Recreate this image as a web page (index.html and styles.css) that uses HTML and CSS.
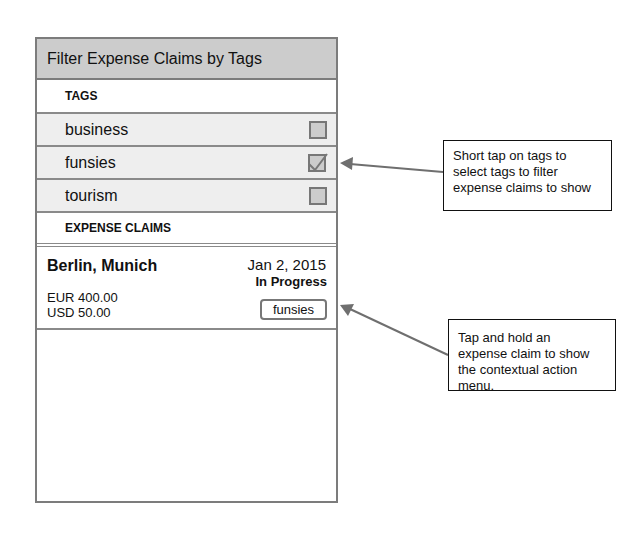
FILE: index.html
```html
<!DOCTYPE html>
<html>
<head>
<meta charset="utf-8">
<link rel="stylesheet" href="styles.css">
</head>
<body>
<div class="page">
  <div class="phone">
    <div class="header">Filter Expense Claims by Tags</div>
    <div class="section">TAGS</div>
    <div class="tag-row"><span>business</span><span class="check"></span></div>
    <div class="tag-row"><span>funsies</span>
      <svg class="checked" width="20" height="20" viewBox="0 0 20 20">
        <rect x="1" y="3" width="16" height="16" fill="#cccccc" stroke="#777" stroke-width="2"/>
        <path d="M1 12 L7 18 L19 2" fill="none" stroke="#777" stroke-width="2"/>
      </svg>
    </div>
    <div class="tag-row"><span>tourism</span><span class="check"></span></div>
    <div class="section section-claims">EXPENSE CLAIMS</div>
    <div class="claim">
      <div class="claim-left">
        <div class="claim-title">Berlin, Munich</div>
        <div class="amounts">
          <div>EUR 400.00</div>
          <div>USD 50.00</div>
        </div>
      </div>
      <div class="claim-right">
        <div class="claim-date">Jan 2, 2015</div>
        <div class="claim-status">In Progress</div>
        <div class="claim-tag">funsies</div>
      </div>
    </div>
  </div>

  <svg class="arrows" width="625" height="540" viewBox="0 0 625 540">
    <line x1="443" y1="172" x2="350" y2="164" stroke="#6f6f6f" stroke-width="2"/>
    <polygon points="340,163 353,157 352,170" fill="#6f6f6f"/>
    <line x1="448" y1="355" x2="350" y2="309" stroke="#6f6f6f" stroke-width="2"/>
    <polygon points="340,305 354,304 348,316" fill="#6f6f6f"/>
  </svg>

  <div class="note note-one">Short tap on tags to select tags to filter expense claims to show</div>
  <div class="note note-two">Tap and hold an expense claim to show the contextual action menu.</div>
</div>
</body>
</html>
```
FILE: styles.css
```css
* { box-sizing: border-box; }
body {
  margin: 0;
  font-family: "Liberation Sans", Arial, sans-serif;
  color: #111;
  background: #fff;
}
.page {
  position: relative;
  width: 625px;
  height: 540px;
  padding: 37px 0 0 35px;
}
.phone {
  width: 303px;
  height: 466px;
  border: 2px solid #7c7c7c;
  display: flex;
  flex-direction: column;
}
.header {
  height: 41px;
  background: #cccccc;
  border-bottom: 2px solid #7c7c7c;
  font-size: 16px;
  padding-left: 10px;
  display: flex;
  align-items: center;
}
.section {
  height: 34px;
  border-bottom: 2px solid #8a8a8a;
  font-size: 12px;
  font-weight: bold;
  padding-left: 28px;
  display: flex;
  align-items: center;
}
.section-claims {
  height: 34px;
  border-bottom: 4px double #8a8a8a;
}
.tag-row {
  height: 33px;
  background: #eeeeee;
  border-bottom: 2px solid #8a8a8a;
  font-size: 16px;
  padding: 0 9px 0 28px;
  display: flex;
  align-items: center;
  justify-content: space-between;
}
.check {
  width: 18px;
  height: 18px;
  background: #cccccc;
  border: 2px solid #777;
}
.checked {
  margin-top: -2px;
  margin-right: -1px;
}
.claim {
  height: 83px;
  border-bottom: 2px solid #8a8a8a;
  padding: 9px 9px 0 10px;
  display: flex;
  justify-content: space-between;
}
.claim-title {
  font-size: 16px;
  font-weight: bold;
  margin-top: 1px;
}
.amounts {
  margin-top: 15px;
  font-size: 13px;
  line-height: 15px;
}
.claim-right {
  display: flex;
  flex-direction: column;
  align-items: flex-end;
}
.claim-date {
  font-size: 15px;
  margin-right: 1px;
}
.claim-status {
  font-size: 13px;
  font-weight: bold;
  margin-top: 1px;
}
.claim-tag {
  margin-top: 10px;
  width: 67px;
  height: 21px;
  border: 2px solid #777;
  border-radius: 4px;
  font-size: 13px;
  display: flex;
  align-items: center;
  justify-content: center;
}
.arrows {
  position: absolute;
  left: 0;
  top: 0;
}
.note {
  position: absolute;
  border: 1px solid #111;
  background: #fff;
  font-size: 13px;
  line-height: 16px;
  color: #111;
}
.note-one {
  left: 443px;
  top: 140px;
  width: 169px;
  height: 71px;
  padding: 7px 14px 0 9px;
}
.note-two {
  left: 448px;
  top: 319px;
  width: 168px;
  height: 72px;
  padding: 10px 13px 0 9px;
  overflow: hidden;
}
```
